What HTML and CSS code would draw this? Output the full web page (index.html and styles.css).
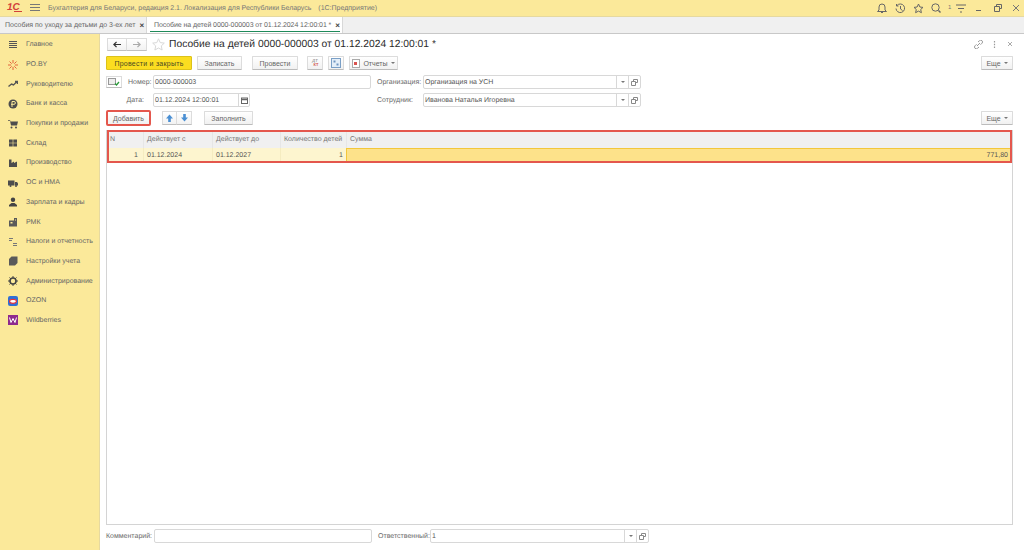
FILE: index.html
```html
<!DOCTYPE html>
<html lang="ru">
<head>
    <meta charset="UTF-8">
    <title>Бухгалтерия для Беларуси</title>
    <link rel="stylesheet" href="styles.css">
</head>
<body>
    <header class="titlebar">
        <span class="logo">1С</span>
        <svg class="burger" width="10" height="8" viewBox="0 0 10 8"><path d="M0 .5h10M0 3.500h10M0 6.500h10" stroke="#777" fill="none"/></svg>
        <span class="app-title">Бухгалтерия для Беларуси, редакция 2.1. Локализация для Республики Беларусь</span>
        <span class="app-kind">(1С:Предприятие)</span>
        <div class="title-icons">
            <svg width="10" height="11" viewBox="0 0 10 11"><path d="M5 1a3 3 0 0 1 3 3v3l1.500 1.500h-9L2 7V4a3 3 0 0 1 3-3zM4 9.500h2" fill="none" stroke="#666"/></svg>
            <svg class="ml-8" width="11" height="11" viewBox="0 0 11 11"><path d="M2 2.500a4.300 4.300 0 1 1-1 3M1.500 1v2h2M5.500 3v3l2 1.500" fill="none" stroke="#666"/></svg>
            <svg class="ml-7" width="11" height="11" viewBox="0 0 11 11"><path d="M5.500 1l1.400 3 3.100.4-2.300 2.100.7 3.200-2.900-1.600-2.900 1.600.7-3.200L1 4.400 4.100 4z" fill="none" stroke="#666"/></svg>
            <svg class="ml-7" width="10" height="11" viewBox="0 0 10 11"><circle cx="4.500" cy="4.500" r="3.700" fill="none" stroke="#666"/><path d="M7.500 7.500l2 2" stroke="#666" stroke-width="1.500"/></svg>
            <span class="user-num">1</span>
            <svg class="ml-5" width="10" height="9" viewBox="0 0 10 9"><path d="M0 1h10M2 4.500h6M4 8h2" stroke="#666" fill="none"/></svg>
            <svg class="ml-9" width="8" height="8" viewBox="0 0 8 8"><path d="M1 6.500h5" stroke="#666" fill="none"/></svg>
            <svg class="ml-11" width="8" height="8" viewBox="0 0 8 8"><path d="M2.500 2.500V.5h5v4h-2M.5 2.500h5v5h-5z" fill="none" stroke="#666"/></svg>
            <svg class="ml-10" width="8" height="8" viewBox="0 0 8 8"><path d="M1 1l6 6M7 1L1 7" stroke="#777" fill="none"/></svg>
        </div>
    </header>

    <nav class="tabs">
        <div class="tab">Пособия по уходу за детьми до 3-ех лет <span class="tab-close">×</span></div>
        <div class="tab tab-active">Пособие на детей 0000-000003 от 01.12.2024 12:00:01 * <span class="tab-close">×</span></div>
    </nav>

    <div class="main">
        <aside class="sidebar">
            <div class="side-item">
                <svg width="10" height="10" viewBox="0 0 10 10"><path d="M1 1.500h8M1 3.500h8M1 5.500h8M1 7.500h8" stroke="#555" fill="none"/></svg>
                Главное
            </div>
            <div class="side-item">
                <svg width="10" height="10" viewBox="0 0 10 10"><path d="M5 0v10M0 5h10M1.500 1.500l7 7M8.500 1.500l-7 7" stroke="#e2643c" fill="none"/><circle cx="5" cy="5" r="2" fill="#fbe99a"/></svg>
                РО.BY
            </div>
            <div class="side-item">
                <svg width="10" height="10" viewBox="0 0 10 10"><path d="M.5 7.500l3-2.500 2 1 3.500-3.500M7 2.500h2.500V5" stroke="#555" stroke-width="1.400" fill="none"/></svg>
                Руководителю
            </div>
            <div class="side-item">
                <svg width="10" height="10" viewBox="0 0 10 10"><circle cx="5" cy="5" r="4.500" fill="#4d4d4d"/><path d="M4 8V2.500h2a1.300 1.300 0 0 1 0 2.800H3" stroke="#fbe99a" fill="none"/></svg>
                Банк и касса
            </div>
            <div class="side-item">
                <svg width="10" height="10" viewBox="0 0 10 10"><path d="M0 1h2l.5 1.500H10L9 6.500H3L2 1.700H0z" fill="#4d4d4d"/><circle cx="3.500" cy="8.500" r="1" fill="#4d4d4d"/><circle cx="8" cy="8.500" r="1" fill="#4d4d4d"/></svg>
                Покупки и продажи
            </div>
            <div class="side-item">
                <svg width="10" height="10" viewBox="0 0 10 10"><path d="M1 1.500h3.700v3.200H1zM5.300 1.500H9v3.200H5.300zM1 5.300h3.700v3.200H1zM5.300 5.300H9v3.200H5.300z" fill="#4d4d4d"/></svg>
                Склад
            </div>
            <div class="side-item">
                <svg width="10" height="10" viewBox="0 0 10 10"><path d="M1 9V1.500h2.500V5L6 3.500V5l3-1.500V9z" fill="#4d4d4d"/></svg>
                Производство
            </div>
            <div class="side-item">
                <svg width="10" height="10" viewBox="0 0 10 10"><path d="M0 2.500h6.500V7.500H0zM7 4h2l1 1.500v2H7z" fill="#4d4d4d"/><circle cx="2.500" cy="8" r="1" fill="#4d4d4d"/><circle cx="8" cy="8" r="1" fill="#4d4d4d"/></svg>
                ОС и НМА
            </div>
            <div class="side-item">
                <svg width="10" height="10" viewBox="0 0 10 10"><circle cx="5" cy="2.700" r="2.200" fill="#444"/><path d="M1 9.500V8l2.500-2h3L9 8v1.500z" fill="#444"/></svg>
                Зарплата и кадры
            </div>
            <div class="side-item">
                <svg width="10" height="10" viewBox="0 0 10 10"><path d="M1 3.500h5V1h3v8.500H1z" fill="#5a5a5a"/><path d="M2.500 5h2v1.500h-2zM7 2.500h1v1H7z" fill="#fbe99a"/></svg>
                РМК
            </div>
            <div class="side-item">
                <svg width="10" height="10" viewBox="0 0 10 10"><path d="M1 1.500h4M1 3.500h3M5 6.500h4M5 8.500h4" stroke="#777" fill="none"/></svg>
                Налоги и отчетность
            </div>
            <div class="side-item">
                <svg width="10" height="10" viewBox="0 0 10 10"><path d="M1 3l2.500-2.500H9.500V7L7 9.500H1z" fill="#5a5a5a"/></svg>
                Настройки учета
            </div>
            <div class="side-item">
                <svg width="10" height="10" viewBox="0 0 10 10"><circle cx="5" cy="5" r="3" fill="none" stroke="#444" stroke-width="1.600"/><path d="M5 0v2M5 8v2M0 5h2M8 5h2M1.500 1.500l1.200 1.200M7.300 7.300l1.200 1.200M8.500 1.500L7.300 2.700M2.700 7.300L1.500 8.500" stroke="#444"/></svg>
                Администрирование
            </div>
            <div class="side-item">
                <svg width="10" height="10" viewBox="0 0 10 10"><rect width="10" height="10" rx="2" fill="#2f6fd6"/><ellipse cx="5" cy="5.300" rx="3.500" ry="2" fill="#fff" stroke="#e2333c" stroke-width="1.200"/></svg>
                OZON
            </div>
            <div class="side-item">
                <svg width="10" height="10" viewBox="0 0 10 10"><rect width="10" height="10" fill="#8e2a8e"/><path d="M1.500 2.500l1.500 5 2-4 2 4 1.500-5" fill="none" stroke="#fff"/></svg>
                Wildberries
            </div>
        </aside>

        <main class="form">
            <div class="form-head">
                <div class="nav-pair">
                    <button class="nav-btn"><svg width="8" height="7" viewBox="0 0 9 7"><path d="M9 3.500H2M4 .5l-3 3 3 3" fill="none" stroke="#333" stroke-width="1.400"/></svg></button>
                    <button class="nav-btn"><svg width="8" height="7" viewBox="0 0 9 7"><path d="M0 3.500h7M5 .5l3 3-3 3" fill="none" stroke="#aaa" stroke-width="1.400"/></svg></button>
                </div>
                <svg class="fav" width="13" height="13" viewBox="0 0 13 13"><path d="M6.500.8l1.700 3.800 4.100.5-3 2.800.8 4.100-3.600-2-3.600 2 .8-4.100-3-2.800 4.100-.5z" fill="none" stroke="#d8d8d8"/></svg>
                <h1 class="form-title">Пособие на детей 0000-000003 от 01.12.2024 12:00:01 *</h1>
                <div class="head-icons">
                    <svg width="9" height="9" viewBox="0 0 9 9"><path d="M4 2l1.500-1.300a1.700 1.700 0 0 1 2.500 2.500L6.500 4.700M5 7L3.500 8.300A1.700 1.700 0 0 1 1 5.800L2.500 4.300M3 6l3-3" fill="none" stroke="#999"/></svg>
                    <svg class="dots" width="3" height="9" viewBox="0 0 3 9"><path d="M1.500 1v1.500M1.500 3.700v1.500M1.500 6.500V8" stroke="#999" stroke-width="1.200" fill="none"/></svg>
                    <svg class="close" width="6" height="6" viewBox="0 0 6 6"><path d="M1 1l4 4M5 1L1 5" stroke="#aaa" fill="none"/></svg>
                </div>
            </div>

            <div class="cmdbar">
                <button class="btn btn-primary">Провести и закрыть</button>
                <button class="btn btn-save">Записать</button>
                <button class="btn btn-post">Провести</button>
                <button class="btn btn-icon"><span class="dtkt"><i>ДТ</i><b>КТ</b></span></button>
                <button class="btn btn-icon"><svg width="10" height="10" viewBox="0 0 10 10"><rect x=".5" y=".5" width="9" height="9" fill="#e4eef8" stroke="#7a9fc6"/><path d="M2.500 2.500h2v2h-2zM5.500 5.500h2v2h-2z" fill="#6d94bf"/></svg></button>
                <button class="btn btn-report"><svg width="8" height="9" viewBox="0 0 8 9"><rect x=".5" y=".5" width="7" height="8" fill="#fff" stroke="#aaa"/><rect x="2" y="3" width="3" height="3" fill="#d9534f"/></svg> Отчеты <span class="caret"></span></button>
                <button class="btn btn-more">Еще <span class="caret"></span></button>
            </div>

            <div class="fields">
                <div class="fields-col">
                    <div class="field-row">
                        <button class="doc-btn"><svg width="12" height="8" viewBox="0 0 12 8"><rect x=".5" y=".5" width="7" height="6" fill="#eee" stroke="#999"/><path d="M7 5.500l1.500 1.500L11 4" fill="none" stroke="#2a9a3a" stroke-width="1.300"/></svg></button>
                        <label class="lbl lbl-num">Номер:</label>
                        <div class="input input-num"><span class="input-text">0000-000003</span></div>
                    </div>
                    <div class="field-row">
                        <label class="lbl lbl-date">Дата:</label>
                        <div class="input input-date">
                            <span class="input-text">01.12.2024 12:00:01</span>
                            <span class="input-btn input-btn-date"><svg width="7" height="7" viewBox="0 0 7 7"><rect x=".5" y="1" width="6" height="5.500" fill="none" stroke="#666"/><path d="M0 2.500h7" stroke="#666" stroke-width="1.500"/></svg></span>
                        </div>
                    </div>
                </div>
                <div class="fields-col">
                    <div class="field-row">
                        <label class="lbl lbl-org">Организация:</label>
                        <div class="input input-org">
                            <span class="input-text">Организация на УСН</span>
                            <span class="input-btn"><span class="caret"></span></span>
                            <span class="input-btn"><svg class="open" width="7" height="7" viewBox="0 0 7 7"><path d="M2.500 2V.5h4v3H5M.5 2.500h4v4h-4z" fill="none" stroke="#888"/></svg></span>
                        </div>
                    </div>
                    <div class="field-row">
                        <label class="lbl lbl-org">Сотрудник:</label>
                        <div class="input input-org">
                            <span class="input-text">Иванова Наталья Игоревна</span>
                            <span class="input-btn"><span class="caret"></span></span>
                            <span class="input-btn"><svg class="open" width="7" height="7" viewBox="0 0 7 7"><path d="M2.500 2V.5h4v3H5M.5 2.500h4v4h-4z" fill="none" stroke="#888"/></svg></span>
                        </div>
                    </div>
                </div>
            </div>

            <div class="table-bar">
                <button class="btn btn-add">Добавить</button>
                <div class="updown">
                    <button class="nav-btn"><svg width="7" height="8" viewBox="0 0 8 9"><path d="M4 .5L8 5H5.500v4h-3V5H0z" fill="#4a8fd3"/></svg></button>
                    <button class="nav-btn"><svg width="7" height="8" viewBox="0 0 8 9"><path d="M4 8.500L8 4H5.500V0h-3v4H0z" fill="#4a8fd3"/></svg></button>
                </div>
                <button class="btn btn-fill">Заполнить</button>
                <button class="btn btn-more">Еще <span class="caret"></span></button>
            </div>

            <div class="table-wrap">
                <div class="t-row t-head">
                    <div class="c c-n">N</div>
                    <div class="c c-from">Действует с</div>
                    <div class="c c-to">Действует до</div>
                    <div class="c c-kids">Количество детей</div>
                    <div class="c c-sum">Сумма</div>
                </div>
                <div class="t-row t-body">
                    <div class="c c-n num">1</div>
                    <div class="c c-from">01.12.2024</div>
                    <div class="c c-to">01.12.2027</div>
                    <div class="c c-kids num">1</div>
                    <div class="c c-sum num">771,80</div>
                </div>
                <div class="mark mark-table"></div>
            </div>

            <div class="form-foot">
                <label class="lbl lbl-comment">Комментарий:</label>
                <div class="input input-comment"></div>
                <label class="lbl lbl-resp">Ответственный:</label>
                <div class="input input-resp">
                    <span class="input-text">1</span>
                    <span class="input-btn"><span class="caret"></span></span>
                    <span class="input-btn"><svg class="open" width="7" height="7" viewBox="0 0 7 7"><path d="M2.500 2V.5h4v3H5M.5 2.500h4v4h-4z" fill="none" stroke="#888"/></svg></span>
                </div>
            </div>
        </main>
    </div>
</body>
</html>
```

FILE: styles.css
```css
* {
    box-sizing: border-box;
}
html, body {
    margin: 0;
    height: 550px;
    overflow: hidden;
}
body {
    font-family: "Liberation Sans", Arial, sans-serif;
    font-size: 7px;
    text-rendering: geometricPrecision;
    color: #555;
    background-color: #fff;
    display: flex;
    flex-direction: column;
}
button {
    font: inherit;
    color: inherit;
    padding: 0;
}
svg {
    display: block;
    flex: none;
}

/* Title bar */
.titlebar {
    height: 17px;
    flex: none;
    display: flex;
    align-items: center;
    background-color: #fbe99a;
    border-bottom: 1px solid #e6d9a0;
    padding-left: 7px;
    color: #777;
}
.logo {
    width: 15px;
    font-weight: bold;
    font-style: italic;
    font-size: 10px;
    line-height: 10px;
    color: #d2403a;
    position: relative;
}
.logo::after {
    content: "";
    position: absolute;
    right: 0;
    bottom: 1px;
    width: 8px;
    height: 1px;
    background-color: #d2403a;
}
.burger {
    margin-left: 8px;
}
.app-title {
    margin-left: 8px;
    letter-spacing: -0.03px;
}
.app-kind {
    margin-left: 7px;
}
.title-icons {
    margin-left: auto;
    padding-right: 4px;
    display: flex;
    align-items: center;
}
.ml-5 { margin-left: 5px; }
.ml-7 { margin-left: 7px; }
.ml-8 { margin-left: 8px; }
.ml-9 { margin-left: 9px; }
.ml-10 { margin-left: 10px; }
.ml-11 { margin-left: 11px; }
.user-num {
    font-size: 6px;
    margin-left: 7px;
    width: 3px;
}

/* Tabs */
.tabs {
    height: 17px;
    flex: none;
    display: flex;
    background-color: #f0f0f0;
    border-bottom: 1px solid #c8c8c8;
}
.tab {
    padding: 0 0 0 5px;
    width: 147px;
    display: flex;
    align-items: center;
    gap: 4px;
    white-space: nowrap;
    border-right: 1px solid #d8d8d8;
    color: #666;
}
.tab-active {
    width: 196px;
    padding-left: 7px;
    letter-spacing: -0.08px;
    background-color: #fff;
    position: relative;
}
.tab-active::after {
    content: "";
    position: absolute;
    left: 3px;
    right: 2px;
    bottom: 1px;
    height: 1px;
    background-color: #1f8a5a;
}
.tab-close {
    font-size: 8px;
    font-weight: bold;
    color: #444;
}

/* Layout */
.main {
    flex: 1;
    display: flex;
    min-height: 0;
}
.sidebar {
    width: 100px;
    flex: none;
    background-color: #fbe99a;
    border-right: 1px solid #e6d9a0;
    padding-top: 1px;
}
.side-item {
    height: 19.7px;
    display: flex;
    align-items: center;
    gap: 8px;
    padding-left: 8px;
    color: #666;
    white-space: nowrap;
}
.form {
    flex: 1;
    min-width: 0;
    display: flex;
    flex-direction: column;
    padding: 0 11px 0 6px;
}

/* Form head */
.form-head {
    height: 20px;
    margin-bottom: 2px;
    display: flex;
    align-items: center;
    padding-left: 1px;
}
.nav-pair, .updown {
    display: flex;
}
.nav-btn {
    width: 20px;
    height: 13px;
    display: flex;
    align-items: center;
    justify-content: center;
    background: linear-gradient(#fff, #f2f2f2);
    border: 1px solid #dcdcdc;
    border-bottom-color: #c0c0c0;
}
.nav-btn + .nav-btn {
    border-left: none;
}
.fav {
    margin-left: 5px;
}
.form-title {
    margin: 0 0 0 4px;
    font-size: 10.3px;
    font-weight: normal;
    color: #2a2a2a;
    white-space: nowrap;
}
.head-icons {
    margin-left: auto;
    display: flex;
    align-items: center;
}
.dots {
    margin-left: 10px;
}
.close {
    margin-left: 11px;
}

/* Buttons */
.cmdbar {
    height: 14px;
    display: flex;
    align-items: stretch;
}
.btn {
    display: flex;
    align-items: center;
    justify-content: center;
    gap: 3px;
    background: linear-gradient(#fff, #f1f1f1);
    border: 1px solid #dcdcdc;
    border-bottom-color: #bcbcbc;
    border-radius: 1px;
    color: #666;
    white-space: nowrap;
}
.btn-primary {
    width: 86px;
    background: #fbdd20;
    border-color: #dcc21a;
    color: #4a4a20;
    letter-spacing: 0.25px;
}
.btn-save {
    width: 45px;
    margin-left: 5px;
}
.btn-post {
    width: 46px;
    margin-left: 10px;
}
.btn-icon {
    width: 16px;
    margin-left: 9px;
}
.btn-icon + .btn-icon {
    margin-left: 5px;
}
.btn-report {
    width: 49px;
    margin-left: 5px;
}
.btn-more {
    width: 32px;
    margin-left: auto;
}
.caret {
    display: inline-block;
    width: 0;
    height: 0;
    border-left: 2px solid transparent;
    border-right: 2px solid transparent;
    border-top: 2px solid #777;
}
.dtkt {
    display: flex;
    flex-direction: column;
    font-size: 4px;
    line-height: 4px;
}
.dtkt i {
    font-style: italic;
    color: #666;
}
.dtkt b {
    color: #d2504a;
    margin-left: 2px;
}

/* Fields */
.fields {
    display: flex;
    margin-top: 5px;
}
.fields-col {
    display: flex;
    flex-direction: column;
    gap: 4px;
}
.field-row {
    height: 14px;
    display: flex;
    align-items: center;
}
.input {
    height: 14px;
    display: flex;
    align-items: stretch;
    background-color: #fff;
    border: 1px solid #d8d8d8;
    border-radius: 2px;
}
.input-text {
    flex: 1;
    display: flex;
    align-items: center;
    padding-left: 1px;
    color: #555;
    white-space: nowrap;
}
.input-btn {
    width: 12px;
    flex: none;
    display: flex;
    align-items: center;
    justify-content: center;
    border-left: 1px solid #d8d8d8;
}
.input-btn-date {
    width: 11px;
}
.doc-btn {
    width: 16px;
    height: 12px;
    display: flex;
    align-items: center;
    justify-content: center;
    background: #fff;
    border: 1px solid #dcdcdc;
    border-bottom-color: #bcbcbc;
}
.lbl {
    color: #6a6a6a;
    white-space: nowrap;
}
.lbl-num {
    width: 25px;
    margin-left: 6px;
}
.input-num {
    width: 218px;
}
.lbl-date {
    width: 47px;
    padding-right: 9px;
    text-align: right;
}
.input-date {
    width: 97px;
}
.fields-col + .fields-col {
    margin-left: 6px;
}
.lbl-org {
    width: 46px;
}
.input-org {
    width: 218px;
}

/* Table */
.table-bar {
    height: 14px;
    margin-top: 4px;
    display: flex;
    align-items: stretch;
}
.btn-add {
    width: 43px;
    margin-left: 1px;
    margin-right: 12px;
    outline: 2px solid #e4574d;
    outline-offset: -1px;
}
.updown .nav-btn {
    width: 15px;
    height: 14px;
}
.btn-fill {
    width: 49px;
    margin-left: 12px;
}
.table-wrap {
    flex: 1;
    margin-top: 5px;
    min-height: 0;
    position: relative;
    border: 1px solid #d4d4d4;
    border-top: none;
}
.t-row {
    display: flex;
    white-space: nowrap;
}
.t-head {
    height: 17px;
    margin-top: 1px;
    background-color: #f0f0f0;
    color: #777;
    align-items: center;
}
.t-body {
    height: 15px;
    background-color: #fdf5cf;
    color: #555;
    align-items: stretch;
}
.c {
    padding: 0 3px;
    display: flex;
    align-items: center;
    height: 100%;
    border-left: 1px solid #e6e6e6;
}
.c:first-child {
    border-left: none;
}
.t-body .c {
    border-left-color: #f5ecc0;
}
.c-n { width: 36px; }
.c-from { width: 69px; }
.c-to { width: 68px; }
.c-kids { width: 66px; }
.c-sum { flex: 1; }
.num {
    justify-content: flex-end;
}
.c-n.num {
    padding-right: 5px;
}
.t-body .c-sum {
    background-color: #fde28a;
    border: 1px solid #f3c73a;
    color: #555;
}
.mark-table {
    position: absolute;
    left: 0;
    right: 0;
    top: 0;
    height: 33px;
    border: 2px solid #e4574d;
}

/* Footer */
.form-foot {
    height: 25px;
    padding-bottom: 3px;
    flex: none;
    display: flex;
    align-items: center;
}
.lbl-comment {
    width: 48px;
}
.input-comment {
    width: 218px;
}
.lbl-resp {
    width: 52px;
    margin-left: 6px;
}
.input-resp {
    width: 219px;
}
```
